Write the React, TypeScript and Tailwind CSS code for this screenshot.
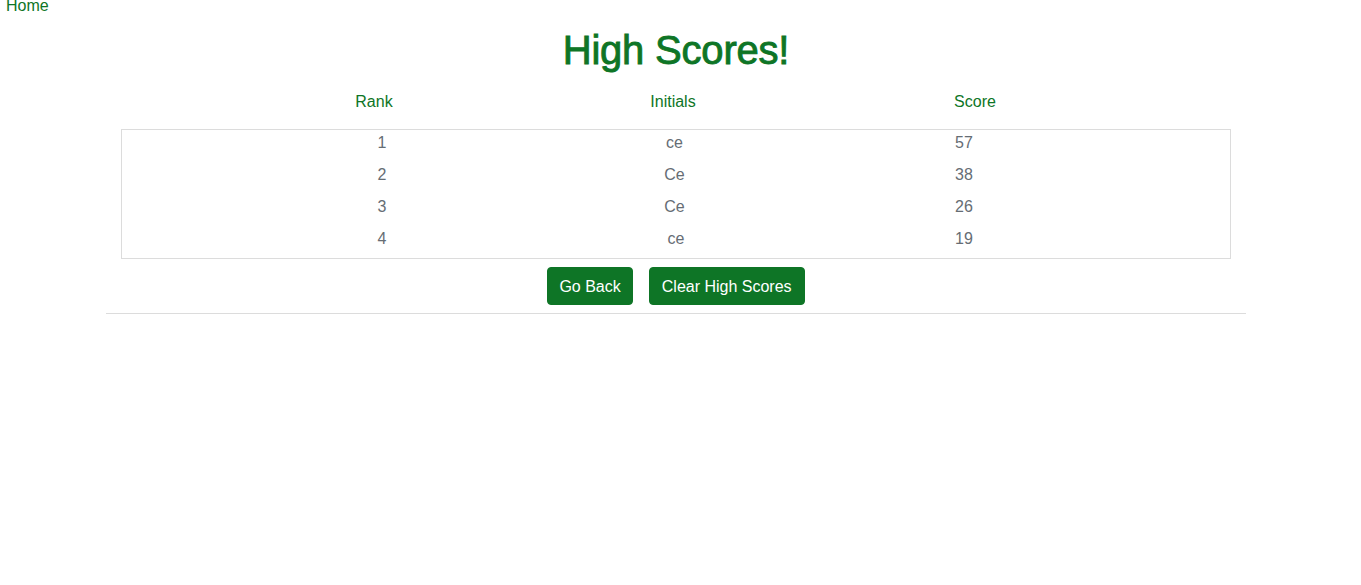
import React from "react";

const rows = [
  { rank: "1", initials: "ce", score: "57" },
  { rank: "2", initials: "Ce", score: "38" },
  { rank: "3", initials: "Ce", score: "26" },
  { rank: "4", initials: "ce", score: "19" },
];

export default function App() {
  return (
    <div className="min-h-[585px] bg-white text-[16px] font-['Liberation_Sans',Arial,sans-serif]">
      <a href="#" className="block pl-[6px] leading-[12px] h-[12px] text-[#0e7526]">
        Home
      </a>
      <div className="mx-[106px] w-[1140px]">
        <h1 className="mt-[14px] text-center text-[40px] leading-[48px] font-normal tracking-[-0.2px] text-[#0e7526] [-webkit-text-stroke:0.9px_#0e7526]">
          High Scores!
        </h1>
        <div className="px-[15px]">
          <div className="mt-[16px] grid grid-cols-[506px_92px_512px] leading-[24px] text-[#0e7526] text-center">
            <div>Rank</div>
            <div>Initials</div>
            <div>Score</div>
          </div>
          <div className="mt-[15px] border border-[#dcdcdc] text-[#666d74]">
            {rows.map((r, i) => (
              <div
                key={i}
                className="grid grid-cols-[520px_65px_514px] leading-[24px] pt-[1px] pb-[7px] text-center"
              >
                <div>{r.rank}</div>
                <div className={i === 3 ? "pl-[3px]" : ""}>{r.initials}</div>
                <div>{r.score}</div>
              </div>
            ))}
          </div>
          <div className="mt-2 flex justify-center gap-4">
            <button className="rounded-[4px] bg-[#0e7526] px-[11px] pt-[7px] pb-[5px] leading-[24px] text-white border border-[#0e7526]">
              Go Back
            </button>
            <button className="rounded-[4px] bg-[#0e7526] px-3 pt-[7px] pb-[5px] leading-[24px] text-white border border-[#0e7526]">
              Clear High Scores
            </button>
          </div>
        </div>
        <hr className="mt-2 border-0 border-t border-[#dcdcdc]" />
      </div>
    </div>
  );
}
